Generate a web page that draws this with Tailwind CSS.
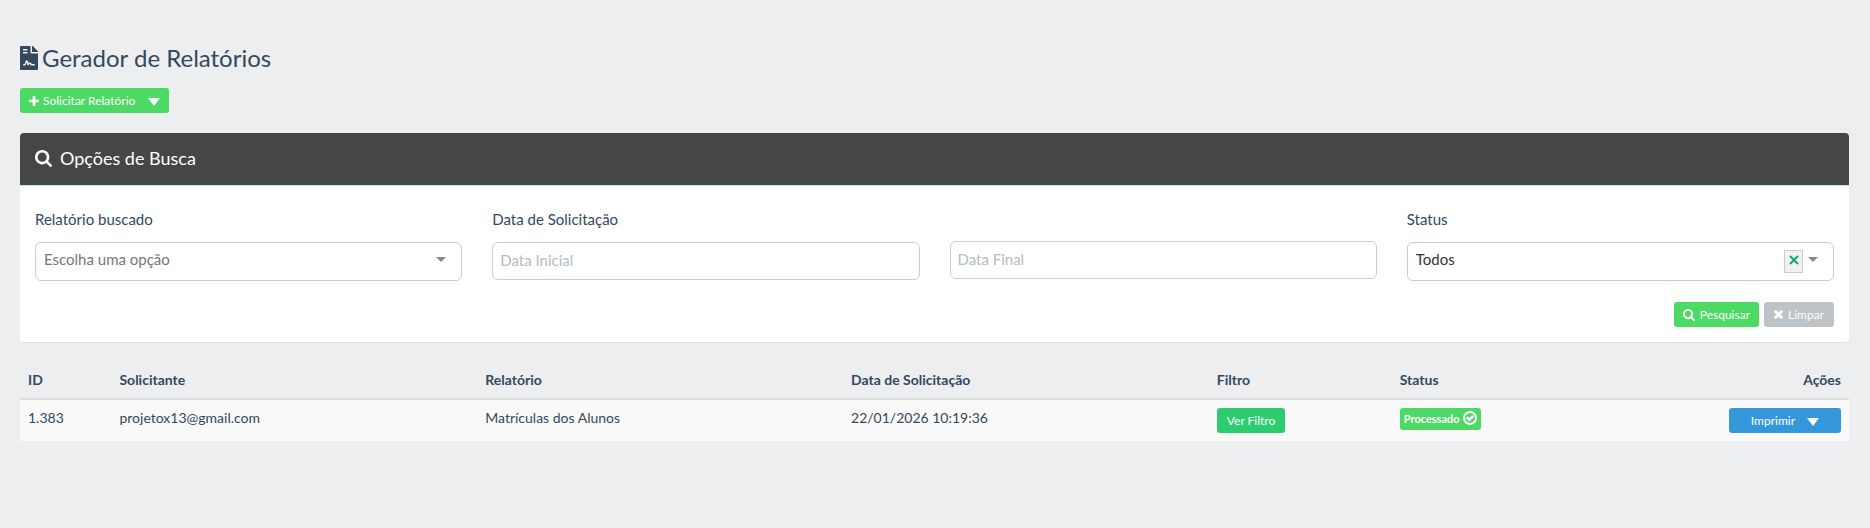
<!DOCTYPE html>
<html lang="pt-BR">
<head>
    <meta charset="UTF-8">
    <meta name="viewport" content="width=device-width, initial-scale=1.0">
    <title>Gerador de Relatórios</title>
    <script src="https://cdn.jsdelivr.net/npm/@tailwindcss/browser@4"></script>
</head>
<body class="min-h-screen bg-[#edeef0] pl-5 pr-[21px] pt-[42px] font-['Lato',sans-serif] text-[#34495e]">
    <!-- icons used more than once -->
    <svg class="hidden">
        <symbol id="i-search" viewBox="64 128 1664 1664"><path d="M1216 832q0-185-131.5-316.5t-316.5-131.5-316.5 131.5-131.5 316.5 131.5 316.5 316.5 131.5 316.5-131.5 131.5-316.5zm512 832q0 52-38 90t-90 38q-54 0-90-38l-343-342q-179 124-399 124-143 0-273.5-55.5t-225-150-150-225-55.5-273.5 55.5-273.5 150-225 225-150 273.5-55.5 273.5 55.5 225 150 150 225 55.5 273.5q0 220-124 399l343 343q37 37 37 90z"/></symbol>
        <symbol id="i-down" viewBox="0 0 12 8"><path d="M0 0h12L6 8z"/></symbol>
        <symbol id="i-caret" viewBox="0 0 10 5"><path d="M0 0h10L5 5z"/></symbol>
    </svg>

    <h1 class="flex h-8 items-center gap-1 text-2xl">
        <svg class="h-6 w-[18px] fill-current" viewBox="0 0 384 512"><path d="M224 136V0H24C10.7 0 0 10.7 0 24v464c0 13.3 10.7 24 24 24h336c13.3 0 24-10.7 24-24V160H248c-13.2 0-24-10.8-24-24zM64 72c0-4.42 3.58-8 8-8h80c4.42 0 8 3.58 8 8v16c0 4.42-3.58 8-8 8H72c-4.42 0-8-3.58-8-8V72zm0 64c0-4.42 3.58-8 8-8h80c4.42 0 8 3.58 8 8v16c0 4.42-3.58 8-8 8H72c-4.42 0-8-3.58-8-8v-16zm192.81 248H304c8.84 0 16 7.16 16 16s-7.16 16-16 16h-47.19c-16.45 0-31.27-9.14-38.64-23.86-2.95-5.92-8.09-6.52-10.17-6.52s-7.22.59-10.02 6.19l-7.67 15.34a15.986 15.986 0 0 1-14.31 8.84c-.38 0-.75-.02-1.14-.05-6.45-.45-12-4.75-14.03-10.89L144 354.59l-10.61 31.88c-5.89 17.66-22.38 29.53-41 29.53H80c-8.84 0-16-7.16-16-16s7.16-16 16-16h12.39c4.83 0 9.11-3.08 10.64-7.66l18.19-54.64c3.3-9.81 12.44-16.41 22.78-16.41s19.48 6.59 22.77 16.41l13.88 41.64c19.77-16.19 54.05-9.7 66 14.16 2.02 4.06 5.96 6.5 10.16 6.5zM377 105L279.1 7c-4.5-4.5-10.6-7-17-7H256v128h128v-6.1c0-6.3-2.5-12.4-7-16.9z"/></svg>
        Gerador de Relatórios
    </h1>

    <button type="button" class="mt-[14px] flex h-[25px] items-center rounded-[3px] bg-[#4cd964] px-[9px] text-xs text-white">
        <svg class="mr-1 size-[10px] fill-current" viewBox="192 128 1408 1408"><path d="M1600 736v192q0 40-28 68t-68 28h-416v416q0 40-28 68t-68 28h-192q-40 0-68-28t-28-68v-416h-416q-40 0-68-28t-28-68v-192q0-40 28-68t68-28h416v-416q0-40 28-68t68-28h192q40 0 68 28t28 68v416h416q40 0 68 28t28 68z"/></svg>
        Solicitar Relatório
        <svg class="ml-[13px] mt-[2px] h-2 w-3 fill-current"><use href="#i-down"/></svg>
    </button>

    <section class="mt-5 rounded border-b border-[#dddfe0] bg-white">
        <h2 class="flex h-[53px] items-center gap-2 rounded-t border-b border-[#bce8f1] bg-[#464646] px-[15px] pb-[2px] text-lg leading-5 text-white">
            <svg class="size-[17px] fill-current"><use href="#i-search"/></svg>
            Opções de Busca
        </h2>
        <form class="px-[15px] pb-[15px] pt-[21px]" onsubmit="return false">
            <div class="grid grid-cols-4 items-start gap-x-[30px] text-[15px] leading-6">
                <div>
                    <label for="relatorio" class="mb-[11px] block">Relatório buscado</label>
                    <div class="relative">
                        <select id="relatorio" class="block h-[39px] w-full appearance-none rounded-md border border-[#ccc] bg-white pb-[5px] pl-2 pr-8 text-[#777]">
                            <option>Escolha uma opção</option>
                        </select>
                        <svg class="pointer-events-none absolute right-4 top-[15px] h-[5px] w-[10px] fill-[#888]"><use href="#i-caret"/></svg>
                    </div>
                </div>
                <div>
                    <label for="inicial" class="mb-[11px] block">Data de Solicitação</label>
                    <input id="inicial" type="text" placeholder="Data Inicial" class="block h-[38px] w-full rounded-md border border-[#ccc] px-[7px] pb-[2px] placeholder:text-[#b2bcc5]">
                </div>
                <div class="pt-[34px]">
                    <input type="text" placeholder="Data Final" aria-label="Data Final" class="block h-[38px] w-full rounded-md border border-[#ccc] px-[7px] pb-[2px] placeholder:text-[#b2bcc5]">
                </div>
                <div>
                    <label for="status" class="mb-[11px] block">Status</label>
                    <div class="relative">
                        <select id="status" class="block h-[39px] w-full appearance-none rounded-md border border-[#ccc] bg-white pb-[5px] pl-2 pr-14 text-[#333]">
                            <option>Todos</option>
                        </select>
                        <button type="button" aria-label="Remover" class="absolute right-[31px] top-2 flex h-[23px] w-[19px] justify-center border border-[#ccc] bg-[#f1f1f1] pt-1">
                            <svg class="size-[10px] stroke-[#16a085]" viewBox="0 0 10 10" fill="none" stroke-width="2"><path d="M1 1l8 8M9 1L1 9"/></svg>
                        </button>
                        <svg class="pointer-events-none absolute right-4 top-[15px] h-[5px] w-[10px] fill-[#888]"><use href="#i-caret"/></svg>
                    </div>
                </div>
            </div>
            <div class="mt-[21px] flex justify-end gap-[5px] text-xs text-white">
                <button type="submit" class="flex h-[25px] items-center gap-[5px] rounded-[3px] bg-[#4cd964] px-[9px]">
                    <svg class="size-3 fill-current"><use href="#i-search"/></svg>
                    Pesquisar
                </button>
                <button type="reset" class="flex h-[25px] items-center gap-[5px] rounded-[3px] bg-[#bdc3c7] px-[10px]">
                    <svg class="size-[9px] fill-current" viewBox="302 366 1188 1188"><path d="M1490 1322q0 40-28 68l-136 136q-28 28-68 28t-68-28l-294-294-294 294q-28 28-68 28t-68-28l-136-136q-28-28-28-68t28-68l294-294-294-294q-28-28-28-68t28-68l136-136q28-28 68-28t68 28l294 294 294-294q28-28 68-28t68 28l136 136q28 28 28 68t-28 68l-294 294 294 294q28 28 28 68z"/></svg>
                    Limpar
                </button>
            </div>
        </form>
    </section>

    <table class="mt-[19px] w-full table-fixed text-left text-sm leading-5">
        <thead>
            <tr class="border-b-2 border-[#ddd] *:p-2">
                <th class="w-[5%]">ID</th>
                <th class="w-[20%]">Solicitante</th>
                <th class="w-[20%]">Relatório</th>
                <th class="w-[20%]">Data de Solicitação</th>
                <th class="w-[10%]">Filtro</th>
                <th class="w-[10%]">Status</th>
                <th class="w-[15%] text-right">Ações</th>
            </tr>
        </thead>
        <tbody>
            <tr class="bg-[#f9f9f9] align-top *:p-2">
                <td>1.383</td>
                <td>projetox13@gmail.com</td>
                <td>Matrículas dos Alunos</td>
                <td>22/01/2026 10:19:36</td>
                <td>
                    <button type="button" class="block h-[25px] rounded-[3px] bg-[#2ecc71] px-[10px] text-xs text-white">Ver Filtro</button>
                </td>
                <td>
                    <span class="flex h-[22px] w-fit items-center gap-[3px] rounded-[3px] bg-[#4cd964] px-1 text-[11px] font-bold text-white">
                        Processado
                        <svg class="mb-[3px] size-[14px] fill-current" viewBox="128 128 1536 1536"><path d="M1299 813l-422 422q-19 19-45 19t-45-19l-294-294q-19-19-19-45t19-45l102-102q19-19 45-19t45 19l147 147 275-275q19-19 45-19t45 19l102 102q19 19 19 45t-19 45zm141 83q0-148-73-273t-198-198-273-73-273 73-198 198-73 273 73 273 198 198 273 73 273-73 198-198 73-273zm224 0q0 209-103 385.5t-279.5 279.5-385.5 103-385.5-103-279.5-279.5-103-385.5 103-385.5 279.5-279.5 385.5-103 385.5 103 279.5 279.5 103 385.5z"/></svg>
                    </span>
                </td>
                <td>
                    <button type="button" class="ml-auto flex h-[25px] items-center gap-3 rounded-[3px] bg-[#3498db] px-[22px] text-xs text-white">
                        Imprimir
                        <svg class="mt-[2px] h-2 w-3 fill-current"><use href="#i-down"/></svg>
                    </button>
                </td>
            </tr>
        </tbody>
    </table>
</body>
</html>
